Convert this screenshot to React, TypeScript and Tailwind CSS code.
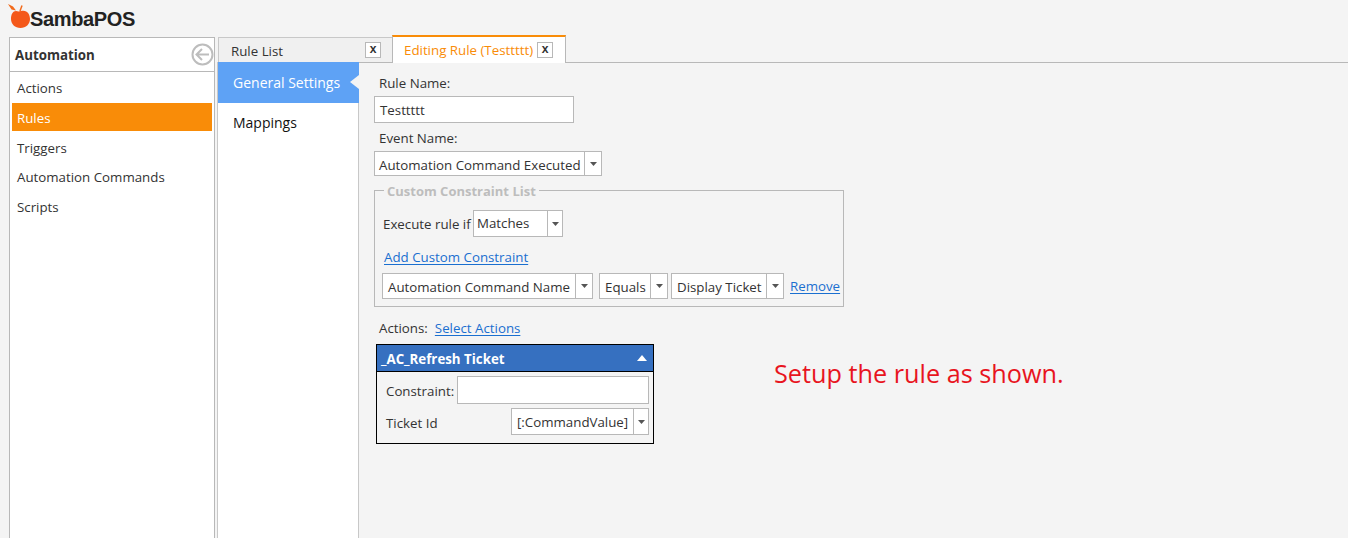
import { ReactNode } from 'react';

function Arrow() {
  return (
    <svg width="7" height="4" viewBox="0 0 7 4" className="block">
      <path d="M0 0H7L3.5 4Z" fill="#555" />
    </svg>
  );
}

// combo box with the small arrow button on the right
function Combo({ label, width, text = 'pl-[5px]', arrow = 'w-[17px]', height = 'h-[25px]' }: { label: string; width: string; text?: string; arrow?: string; height?: string }) {
  return (
    <div className={`flex ${height} ${width} bg-white border border-[#b8b8b8] shrink-0`}>
      <div className={`flex-1 flex items-center ${text} text-[#333] whitespace-nowrap overflow-hidden`}>{label}</div>
      <div className={`${arrow} border-l border-[#b8b8b8] flex items-center justify-center`}>
        <Arrow />
      </div>
    </div>
  );
}

function CloseBox() {
  return (
    <div className="w-[16px] h-[16px] border border-[#b8b8b8] bg-white flex items-center justify-center text-[12px] leading-none font-bold text-[#333] font-['Liberation_Mono',monospace] shrink-0">
      x
    </div>
  );
}

function Link({ children }: { children: ReactNode }) {
  return <a className="text-[#1a6fd0] underline underline-offset-2 whitespace-nowrap">{children}</a>;
}

function Logo() {
  return (
    <div className="flex items-start h-[37px] pl-[8px] pt-[4px]">
      <svg width="23" height="25" viewBox="0 0 23 25" className="block shrink-0">
        <path d="M0 0L5 2.5L8 6.5L3.5 5.5Z" fill="#f26a1b" />
        <path d="M14 1.5L12 7" stroke="#f26a1b" strokeWidth="1.5" />
        <path d="M8 7C10 7.5 11 7.5 13 7C19 5.5 22 10 22 15C22 20 18 24 12.5 24C7 24 3 20 3 15C3 10 5 7 8 7Z" fill="#f4581a" />
      </svg>
      <span className="font-['Liberation_Sans',sans-serif] font-bold text-[20px] leading-[22px] mt-[4px] tracking-[-0.35px] text-[#222] -ml-[1px]">SambaPOS</span>
    </div>
  );
}

function Sidebar() {
  const items = ['Actions', 'Rules', 'Triggers', 'Automation Commands', 'Scripts'];
  return (
    <div className="w-[206px] ml-[9px] border border-[#b8b8b8] border-b-0 bg-white shrink-0">
      <div className="h-[34px] border-b border-[#b8b8b8] flex items-center justify-between pl-[5px]">
        <span className="font-bold text-[#333]">Automation</span>
        <svg width="23" height="23" viewBox="0 0 23 23" fill="none" stroke="#bdbdbd" strokeWidth="2">
          <circle cx="11.5" cy="11.5" r="10" />
          <path d="M18 11.5H6M11 6L5.5 11.5L11 17" />
        </svg>
      </div>
      <div className="pt-[1px] px-[2px]">
        {items.map((item) => (
          <div
            key={item}
            className={`h-[28px] mb-[1.75px] pt-[2px] flex items-center pl-[5px] ${item === 'Rules' ? 'bg-[#f98c08] text-white' : 'text-[#333]'}`}
          >
            {item}
          </div>
        ))}
      </div>
    </div>
  );
}

function Tabs() {
  return (
    <div className="flex h-[26px] border-b border-[#b8b8b8] items-end">
      <div className="w-[174px] h-[25px] ml-[1px] bg-[#f0f0f0] border-t border-l border-[#c8c8c8] flex items-center justify-between pl-[12px] pr-[11px] text-[#333] shrink-0">
        <span className="pt-[1px]">Rule List</span>
        <CloseBox />
      </div>
      <div className="h-[28px] w-[174px] mb-[-1px] bg-white border-t-2 border-t-[#f98c08] border-l border-r border-[#b8b8b8] flex items-center pl-[11px] text-[#f98c08] shrink-0 gap-[4px]">
        <span>Editing Rule (Testtttt)</span>
        <CloseBox />
      </div>
    </div>
  );
}

function Editor() {
  return (
    <div className="flex-1 pl-[15px] pt-[9px] text-[#333]">
      <div className="pl-[5px] h-[22px] flex items-center">Rule Name:</div>
      <div className="w-[200px] h-[27px] mt-[2px] bg-white border border-[#b8b8b8] flex items-center pl-[5px]">Testtttt</div>
      <div className="pl-[5px] h-[22px] mt-[4px] flex items-center">Event Name:</div>
      <div className="mt-[2px]">
        <Combo label="Automation Command Executed" width="w-[228px]" text="pl-[4px] pt-[2px]" />
      </div>

      <fieldset className="w-[470px] h-[125px] mt-[6px] border border-[#b8b8b8] pl-[7px]">
        <legend className="ml-[2px] px-[3px] pt-[3px] font-bold text-[#bdbdbd] leading-[13px] text-[13px]">Custom Constraint List</legend>
        <div className="flex items-center mt-[12px]">
          <span className="ml-[1px] w-[90px] whitespace-nowrap">Execute rule if</span>
          <Combo label="Matches" width="w-[90px]" text="pl-[3px] pb-[2px]" arrow="w-[15px]" height="h-[27px]" />
        </div>
        <div className="mt-[10px] ml-[2px] h-[20px] flex items-center"><Link>Add Custom Constraint</Link></div>
        <div className="flex items-center mt-[6px]">
          <Combo label="Automation Command Name" width="w-[211px]" text="pl-[5px] pt-[2px]" height="h-[26px]" />
          <div className="ml-[6px]"><Combo label="Equals" width="w-[69px]" text="pl-[5px] pt-[2px]" height="h-[26px]" /></div>
          <div className="ml-[3px]"><Combo label="Display Ticket" width="w-[113px]" text="pl-[5px] pt-[2px]" height="h-[26px]" /></div>
          <div className="ml-[6px]"><Link>Remove</Link></div>
        </div>
      </fieldset>

      <div className="flex items-center h-[20px] mt-[11px] pl-[5px] gap-[7px]">
        <span>Actions:</span>
        <Link>Select Actions</Link>
      </div>

      <div className="flex items-start mt-[6px] ml-[2px]">
        <div className="w-[278px] border border-black bg-[#f4f4f4]">
          <div className="h-[27px] bg-[#3670c0] border-b border-black flex items-center justify-between pl-[4px] pr-[6px] pt-[1px] text-white font-bold">
            <span>_AC_Refresh Ticket</span>
            <svg width="10" height="6" viewBox="0 0 10 6" className="mb-[1px]"><path d="M0 6L5 0L10 6Z" fill="#fff" /></svg>
          </div>
          <div className="flex items-center mt-[4px] pl-[9px] pr-[4px]">
            <span className="w-[67px] pt-[2px] whitespace-nowrap">Constraint:</span>
            <div className="flex-1 h-[28px] ml-[4px] bg-white border border-[#b8b8b8]" />
          </div>
          <div className="flex items-center justify-between mt-[4px] mb-[8px] pl-[9px] pr-[4px]">
            <span className="pt-[2px]">Ticket Id</span>
            <Combo label="[:CommandValue]" width="w-[138px]" arrow="w-[15px]" height="h-[27px]" />
          </div>
        </div>
        <div className="ml-[120px] mt-[13px] text-[25.25px] leading-[32px] text-[#e8141e] whitespace-nowrap">Setup the rule as shown.</div>
      </div>
    </div>
  );
}

export default function App() {
  return (
    <div className="w-[1348px] h-[538px] overflow-hidden bg-[#f4f4f4] text-[13.3px] leading-[20px] font-['Open_Sans','Noto_Sans',sans-serif] flex flex-col">
      <Logo />
      <div className="flex flex-1 min-h-0">
        <Sidebar />
        <div className="flex-1 pl-[2px] flex flex-col min-w-0">
          <Tabs />
          <div className="flex flex-1 min-h-0">
            <div className="w-[142px] -mt-[1px] bg-white border-r border-l border-[#c8c8c8] shrink-0 text-[14px]">
              <div className="h-[41px] bg-[#5ea2f5] text-white flex items-center pl-[15px] relative -mr-[1px] font-medium">
                General Settings
                <div className="absolute right-0 top-[13px] w-0 h-0 border-y-[7px] border-y-transparent border-r-[9px] border-r-[#f4f4f4]" />
              </div>
              <div className="h-[39px] flex items-center pl-[15px] text-[#111] font-medium">Mappings</div>
            </div>
            <Editor />
          </div>
        </div>
      </div>
    </div>
  );
}
